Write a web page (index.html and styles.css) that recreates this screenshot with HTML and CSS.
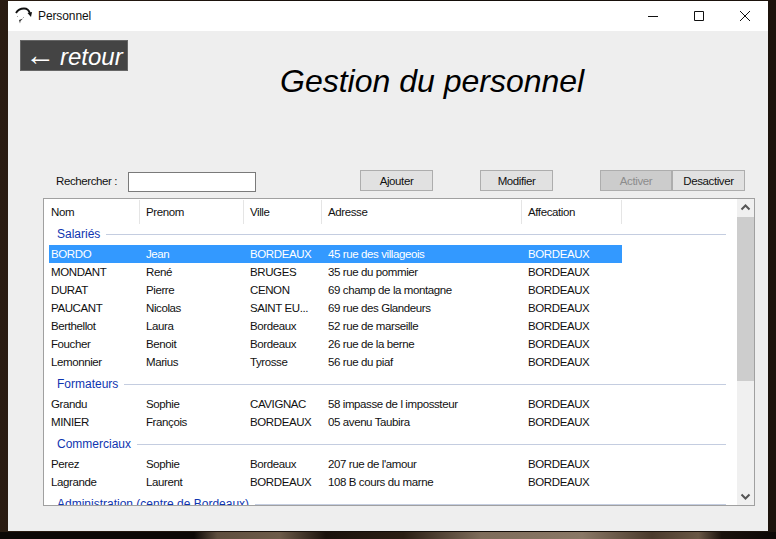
FILE: index.html
```html
<!DOCTYPE html>
<html lang="fr">
<head>
    <meta charset="UTF-8">
    <title>Personnel</title>
    <link rel="stylesheet" href="styles.css">
</head>
<body>

    <div class="window">
        <!-- Title bar -->
        <div class="titlebar">
            <svg class="app-icon" width="18" height="18" viewBox="0 0 18 18">
                <path d="M1 6C3 2.500 6 1.500 9 1.500c3 0 5 1.500 6 5" fill="none" stroke="#111" stroke-width="1.800"/>
                <path d="M12.500 6l4.500-1-1 5z" fill="#111"/>
                <path d="M4 13l4-1.500-2.500 2.500-.5 2.500z" fill="#333"/>
                <path d="M2 9l1 1M8 11l1-1" stroke="#aaa" stroke-width="1"/>
            </svg>
            <span class="window-title">Personnel</span>
            <div class="controls">
                <svg width="46" height="30" viewBox="0 0 46 30"><path d="M17 15.500h10" stroke="#111"/></svg>
                <svg width="46" height="30" viewBox="0 0 46 30"><path d="M17.500 10.500h9v9h-9z" fill="none" stroke="#111"/></svg>
                <svg width="46" height="30" viewBox="0 0 46 30"><path d="M17 10l10 10M27 10l-10 10" stroke="#111"/></svg>
            </div>
        </div>

        <div class="content">
            <div class="heading">
                <button class="back"><span class="back-arrow">&larr;</span> retour</button>
                <h1>Gestion du personnel</h1>
            </div>

            <!-- Search and actions -->
            <div class="toolbar">
                <label class="search-label">Rechercher :</label>
                <input type="text" class="search-input">
                <button class="btn btn-add">Ajouter</button>
                <button class="btn btn-edit">Modifier</button>
                <button class="btn btn-on" disabled>Activer</button>
                <button class="btn">Desactiver</button>
            </div>

            <!-- Staff list -->
            <div class="list">
                <div class="list-main">
                    <div class="row head">
                        <span>Nom</span><span>Prenom</span><span>Ville</span><span>Adresse</span><span>Affecation</span>
                    </div>

                    <div class="group first"><span>Salariés</span></div>
                    <div class="row selected"><span>BORDO</span><span>Jean</span><span>BORDEAUX</span><span>45 rue des villageois</span><span>BORDEAUX</span></div>
                    <div class="row"><span>MONDANT</span><span>René</span><span>BRUGES</span><span>35 rue du pommier</span><span>BORDEAUX</span></div>
                    <div class="row"><span>DURAT</span><span>Pierre</span><span>CENON</span><span>69 champ de la montagne</span><span>BORDEAUX</span></div>
                    <div class="row"><span>PAUCANT</span><span>Nicolas</span><span>SAINT EU...</span><span>69 rue des Glandeurs</span><span>BORDEAUX</span></div>
                    <div class="row"><span>Berthellot</span><span>Laura</span><span>Bordeaux</span><span>52 rue de marseille</span><span>BORDEAUX</span></div>
                    <div class="row"><span>Foucher</span><span>Benoit</span><span>Bordeaux</span><span>26 rue de la berne</span><span>BORDEAUX</span></div>
                    <div class="row"><span>Lemonnier</span><span>Marius</span><span>Tyrosse</span><span>56 rue du piaf</span><span>BORDEAUX</span></div>

                    <div class="group"><span>Formateurs</span></div>
                    <div class="row"><span>Grandu</span><span>Sophie</span><span>CAVIGNAC</span><span>58 impasse de l impossteur</span><span>BORDEAUX</span></div>
                    <div class="row"><span>MINIER</span><span>François</span><span>BORDEAUX</span><span>05 avenu Taubira</span><span>BORDEAUX</span></div>

                    <div class="group"><span>Commerciaux</span></div>
                    <div class="row"><span>Perez</span><span>Sophie</span><span>Bordeaux</span><span>207 rue de l'amour</span><span>BORDEAUX</span></div>
                    <div class="row"><span>Lagrande</span><span>Laurent</span><span>BORDEAUX</span><span>108 B cours du marne</span><span>BORDEAUX</span></div>

                    <div class="group"><span>Administration (centre de Bordeaux)</span></div>
                </div>

                <div class="scrollbar">
                    <svg width="17" height="17" viewBox="0 0 17 17"><path d="M4.500 10.500l4-4 4 4" fill="none" stroke="#555" stroke-width="2"/></svg>
                    <div class="thumb"></div>
                    <div class="track"></div>
                    <svg width="17" height="17" viewBox="0 0 17 17"><path d="M4.500 6.500l4 4 4-4" fill="none" stroke="#555" stroke-width="2"/></svg>
                </div>
            </div>
        </div>
    </div>

</body>
</html>
```

FILE: styles.css
```css
/* Desktop behind the window */
body {
    margin: 0;
    height: 539px;
    overflow: hidden;
    box-sizing: border-box;
    padding: 1px 8px 0;
    background:
        linear-gradient(90deg, #0c0806 0, #0c0806 25%, #5e4e3e 28%, #6e5c4a 36%, #1a120c 42%, #2a1e14 52%, #7e6c5a 62%, #8a7866 75%, #4a3a2c 84%, #6a5846 90%, #1a120c 93%, #0c0806 100%) 0 532px / 776px 7px no-repeat,
        linear-gradient(90deg, #2a1c12, #120c08 50%, #1c130c);
    font-family: "Liberation Sans", sans-serif;
    font-size: 11.5px;
    letter-spacing: -0.4px;
    color: #111;
}

.window {
    width: 760px;
    height: 530px;
    background-color: #eeeeee;
}

/* Title bar */
.titlebar {
    height: 30px;
    background-color: #fff;
    display: flex;
    align-items: center;
    padding-left: 7px;
}

.app-icon {
    margin-right: 5px;
}

.window-title {
    font-size: 12px;
    letter-spacing: -0.1px;
}

.controls {
    margin-left: auto;
    margin-right: -1px;
    display: flex;
}

/* Back button and page title */
.content {
    padding: 9px 12px 0;
}

.heading {
    height: 130px;
    display: flex;
    align-items: flex-start;
}

.back {
    width: 108px;
    height: 31px;
    padding: 2px 0 0;
    background-color: #444;
    border: 1px solid #666;
    color: #fff;
    font-family: inherit;
    font-size: 24px;
    font-style: italic;
    letter-spacing: 0;
    word-spacing: -2px;
    line-height: 1;
    white-space: nowrap;
}

.back-arrow {
    font-size: 30px;
    font-style: normal;
    line-height: 20px;
}

h1 {
    margin: 21px 0 0 152px;
    font-size: 32px;
    font-weight: normal;
    font-style: italic;
    letter-spacing: 0;
    color: #000;
    line-height: 40px;
}

/* Search and action buttons */
.toolbar {
    height: 28px;
    display: flex;
    align-items: flex-start;
}

.search-label {
    margin: 5px 0 0 36px;
    width: 72px;
}

.search-input {
    width: 128px;
    height: 20px;
    margin-top: 2px;
    padding: 0;
    box-sizing: border-box;
    border: 1px solid #7a7a7a;
    background-color: #fff;
}

.btn {
    width: 73px;
    height: 21px;
    padding: 0;
    background-color: #e1e1e1;
    border: 1px solid #adadad;
    color: #111;
    font-family: inherit;
    font-size: 11.5px;
    letter-spacing: -0.4px;
}

.btn-add {
    margin-left: 104px;
}

.btn-edit {
    margin-left: 47px;
}

.btn-on {
    margin-left: 47px;
    width: 72px;
    background-color: #cccccc;
    color: #8c8c8c;
}

/* List view */
.list {
    width: 712px;
    height: 308px;
    margin-left: 23px;
    box-sizing: border-box;
    border: 1px solid #a0a0a0;
    background-color: #fff;
    display: flex;
    overflow: hidden;
}

.list-main {
    flex: 1;
    padding-left: 5px;
    overflow: hidden;
}

.row {
    display: grid;
    grid-template-columns: 91px 104px 78px 200px 100px;
    height: 18px;
    line-height: 18px;
    width: 573px;
}

.row span {
    padding-left: 6px;
    white-space: nowrap;
    overflow: hidden;
}

.row span:first-child {
    padding-left: 2px;
}

.head {
    height: 24px;
    line-height: 24px;
    margin: 1px 0;
}

.head span {
    border-right: 1px solid #e5e5e5;
}

.selected {
    background-color: #3399ff;
    color: #fff;
}

/* Group headings with a rule after the label */
.group {
    display: flex;
    align-items: center;
    height: 18px;
    margin: 4px 11px 2px 8px;
    color: #0f35b0;
    font-size: 12px;
    letter-spacing: 0;
}

.group.first {
    margin-top: 0;
}

.group::after {
    content: "";
    flex: 1;
    height: 1px;
    margin-left: 6px;
    background-color: #c4cde0;
}

/* Scrollbar */
.scrollbar {
    width: 17px;
    background-color: #f0f0f0;
    display: flex;
    flex-direction: column;
}

.thumb {
    height: 164px;
    margin-top: 1px;
    background-color: #cdcdcd;
}

.track {
    flex: 1;
}
```
